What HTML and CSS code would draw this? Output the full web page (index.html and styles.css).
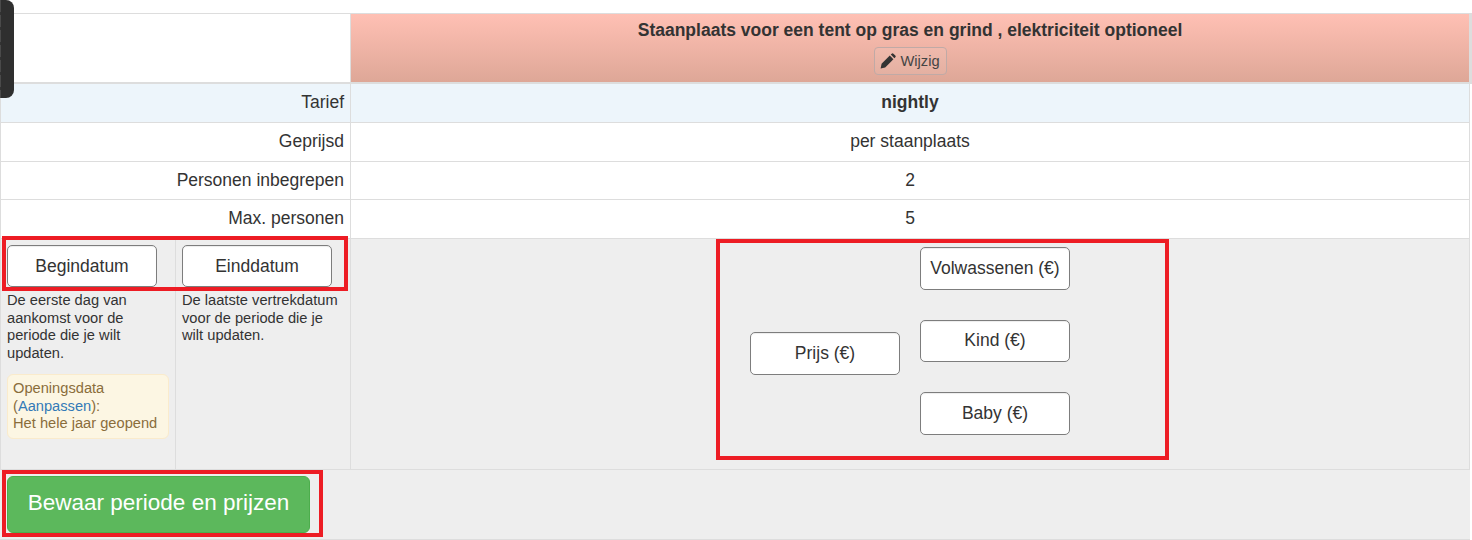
FILE: index.html
```html
<!DOCTYPE html>
<html lang="en">
<head>
    <meta charset="UTF-8">
    <title>Periode en prijzen</title>
    <link rel="stylesheet" href="styles.css">
</head>
<body>
    <div class="side-tab"></div>

    <div class="page">
        <table class="rates">
            <thead>
                <tr>
                    <th class="label-col"></th>
                    <th class="room-head">
                        <div class="room-title">Staanplaats voor een tent op gras en grind , elektriciteit optioneel</div>
                        <button class="edit-btn">
                            <svg class="pencil" viewBox="0 0 16 16" width="16" height="16">
                                <path d="M0.6 15.4l1-4.6 8.2-8.2 3.6 3.6-8.2 8.2z"/>
                                <path d="M10.8 1.6l0.9-0.9a1.2 1.2 0 0 1 1.7 0l1.9 1.9a1.2 1.2 0 0 1 0 1.7l-0.9 0.9z"/>
                            </svg>
                            Wijzig
                        </button>
                    </th>
                </tr>
            </thead>
            <tbody>
                <tr class="row-blue">
                    <td class="label-col">Tarief</td>
                    <td class="value strong">nightly</td>
                </tr>
                <tr>
                    <td class="label-col">Geprijsd</td>
                    <td class="value">per staanplaats</td>
                </tr>
                <tr>
                    <td class="label-col">Personen inbegrepen</td>
                    <td class="value">2</td>
                </tr>
                <tr>
                    <td class="label-col">Max. personen</td>
                    <td class="value">5</td>
                </tr>
                <tr class="row-grey">
                    <td class="dates-cell">
                        <div class="dates">
                            <div class="date-col">
                                <button class="field-btn date-btn">Begindatum</button>
                                <p class="hint">De eerste dag van aankomst voor de periode die je wilt updaten.</p>
                                <div class="notice">
                                    Openingsdata<br>
                                    (<a href="#">Aanpassen</a>):<br>
                                    Het hele jaar geopend
                                </div>
                            </div>
                            <div class="date-col">
                                <button class="field-btn date-btn">Einddatum</button>
                                <p class="hint">De laatste vertrekdatum voor de periode die je wilt updaten.</p>
                            </div>
                        </div>
                    </td>
                    <td class="prices-cell">
                        <div class="prices">
                            <button class="field-btn price-btn">Prijs (€)</button>
                            <div class="price-stack">
                                <button class="field-btn price-btn">Volwassenen (€)</button>
                                <button class="field-btn price-btn">Kind (€)</button>
                                <button class="field-btn price-btn">Baby (€)</button>
                            </div>
                        </div>
                    </td>
                </tr>
            </tbody>
        </table>

        <div class="save-bar">
            <button class="save-btn">Bewaar periode en prijzen</button>
        </div>

        <!-- Red annotation frames -->
        <div class="mark mark-dates"></div>
        <div class="mark mark-prices"></div>
        <div class="mark mark-save"></div>
    </div>
</body>
</html>
```

FILE: styles.css
```css
* {
    box-sizing: border-box;
}
body {
    margin: 0;
    padding: 0;
    background-color: white;
    font-family: "Liberation Sans", Arial, sans-serif;
    font-size: 17.5px;
    line-height: 21.8px;
    color: #333;
}
button {
    font-family: inherit;
}
.page {
    position: relative;
    width: 1470px;
    padding-top: 13px;
}
.side-tab {
    position: absolute;
    left: 0;
    top: 0;
    z-index: 2;
    width: 13.5px;
    height: 98px;
    border-radius: 0 8px 8px 0;
    background-color: #2f2f2f;
    background-image: repeating-linear-gradient(to bottom, #4a4a4a 0, #4a4a4a 12px, #333 12px, #333 15px);
    background-size: 1px 100%;
    background-repeat: no-repeat;
}
.rates {
    width: 1470px;
    table-layout: fixed;
    border-collapse: separate;
    border-spacing: 0;
}
.rates th,
.rates td {
    padding: 8px 6px;
    border-right: 1px solid #ddd;
    border-bottom: 1px solid #ddd;
}
.rates th {
    border-top: 1px solid #ddd;
    border-bottom-width: 2px;
    padding: 6px 6px 0 6px;
    height: 71px;
    vertical-align: top;
}
.label-col {
    width: 351px;
    text-align: right;
}
.rates td.label-col,
.rates td.dates-cell {
    border-left: 1px solid #ddd;
}
.rates th.label-col {
    border-left: 1px solid white;
}
.room-head {
    position: relative;
    background: linear-gradient(to bottom, #ffc0b4, #dea797);
    text-align: center;
    box-shadow: 2px 0 0 #ddd;
}
.room-title {
    font-weight: bold;
    margin-bottom: 5px;
}
.edit-btn {
    display: flex;
    align-items: center;
    gap: 5px;
    height: 28px;
    width: 73px;
    margin: 0 auto;
    padding: 0 5px;
    border: 1px solid #c0aaa6;
    border-radius: 4px;
    background: rgba(255, 255, 255, 0.08);
    color: #444;
    font-size: 14.67px;
}
.pencil {
    fill: #333;
    flex: none;
}
.value {
    text-align: center;
}
.strong {
    font-weight: bold;
}
.row-blue td {
    background-color: #edf5fb;
}
.row-grey td {
    background-color: #eee;
    padding: 0;
    vertical-align: top;
}
.dates {
    display: flex;
}
.date-col {
    width: 174px;
    padding: 6px;
    padding-bottom: 30px;
}
.date-col + .date-col {
    border-left: 1px solid #ddd;
    width: 175px;
}
.field-btn {
    display: block;
    width: 150px;
    border: 1px solid #7d7d7d;
    border-radius: 5px;
    background-color: white;
    box-shadow: inset 0 1px 1px rgba(0, 0, 0, 0.075);
    color: #333;
    font-size: 17.5px;
    padding: 0;
}
.date-btn {
    height: 42px;
}
.hint {
    margin: 5px 0 0 0;
    font-size: 14.67px;
    line-height: 17.5px;
}
.notice {
    margin-top: 12px;
    padding: 5px;
    width: 162px;
    border: 1px solid #faebcc;
    border-radius: 6px;
    background-color: #fcf6e3;
    color: #8a6d3b;
    font-size: 14.67px;
    line-height: 17.5px;
}
.notice a {
    color: #337ab7;
    text-decoration: none;
}
.prices {
    display: flex;
    justify-content: center;
    align-items: center;
    gap: 20px;
    height: 229px;
}
.price-btn {
    height: 42.5px;
}
.price-stack {
    display: flex;
    flex-direction: column;
    gap: 30px;
    align-self: flex-start;
    margin-top: 8px;
}
.save-bar {
    height: 70px;
    padding: 6px 7px;
    background-color: #eee;
    border-bottom: 1px solid #ddd;
}
.save-btn {
    width: 303px;
    height: 57px;
    padding: 0 0 3px 0;
    border: 1px solid #4cae4c;
    border-radius: 6px;
    background-color: #5cb85c;
    color: white;
    font-size: 22.5px;
}
.mark {
    position: absolute;
    border: 4px solid #ed1c24;
    pointer-events: none;
}
.mark-dates {
    left: 2px;
    top: 236px;
    width: 346px;
    height: 55px;
}
.mark-prices {
    left: 716px;
    top: 239px;
    width: 453px;
    height: 221px;
}
.mark-save {
    left: 2px;
    top: 470px;
    width: 321px;
    height: 67px;
}
```
